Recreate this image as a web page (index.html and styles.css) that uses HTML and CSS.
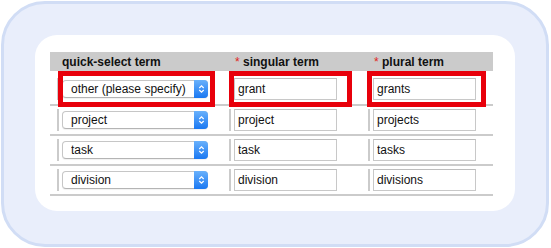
FILE: index.html
```html
<!DOCTYPE html>
<html>
<head>
	<meta charset="utf-8">
	<title>Terms</title>
	<link rel="stylesheet" href="styles.css">
</head>
<body>
	<div class="frame">
		<div class="panel">
			<div class="terms">
				<div class="row head">
					<div class="gap"></div>
					<div class="cell first">quick-select term</div>
					<div class="cell"><span class="req">*</span> singular term</div>
					<div class="cell"><span class="req">*</span> plural term</div>
				</div>

				<div class="row top">
					<div class="gap"></div>
					<div class="cell first flag">
						<div class="picker">
							<select class="pick"><option>other (please specify)</option></select>
							<span class="arrows"><svg width="7" height="10" viewBox="0 0 7 10"><path d="M1.3 4 L3.5 1.8 L5.7 4 M1.3 6 L3.5 8.2 L5.7 6" fill="none" stroke="#fff" stroke-width="1.2"/></svg></span>
						</div>
						<span class="mark m1"></span>
					</div>
					<div class="cell flag"><input class="term" type="text" value="grant"><span class="mark m2"></span></div>
					<div class="cell flag"><input class="term" type="text" value="grants"><span class="mark m3"></span></div>
				</div>

				<div class="row">
					<div class="gap"></div>
					<div class="cell first">
						<div class="picker">
							<select class="pick"><option>project</option></select>
							<span class="arrows"><svg width="7" height="10" viewBox="0 0 7 10"><path d="M1.3 4 L3.5 1.8 L5.7 4 M1.3 6 L3.5 8.2 L5.7 6" fill="none" stroke="#fff" stroke-width="1.2"/></svg></span>
						</div>
					</div>
					<div class="cell"><input class="term" type="text" value="project"></div>
					<div class="cell"><input class="term" type="text" value="projects"></div>
				</div>

				<div class="row">
					<div class="gap"></div>
					<div class="cell first">
						<div class="picker">
							<select class="pick"><option>task</option></select>
							<span class="arrows"><svg width="7" height="10" viewBox="0 0 7 10"><path d="M1.3 4 L3.5 1.8 L5.7 4 M1.3 6 L3.5 8.2 L5.7 6" fill="none" stroke="#fff" stroke-width="1.2"/></svg></span>
						</div>
					</div>
					<div class="cell"><input class="term" type="text" value="task"></div>
					<div class="cell"><input class="term" type="text" value="tasks"></div>
				</div>

				<div class="row">
					<div class="gap"></div>
					<div class="cell first">
						<div class="picker">
							<select class="pick"><option>division</option></select>
							<span class="arrows"><svg width="7" height="10" viewBox="0 0 7 10"><path d="M1.3 4 L3.5 1.8 L5.7 4 M1.3 6 L3.5 8.2 L5.7 6" fill="none" stroke="#fff" stroke-width="1.2"/></svg></span>
						</div>
					</div>
					<div class="cell"><input class="term" type="text" value="division"></div>
					<div class="cell"><input class="term" type="text" value="divisions"></div>
				</div>
			</div>
		</div>
	</div>
</body>
</html>
```

FILE: styles.css
```css
body{
  margin: 0;
  background: #fff;
  font-family: "Liberation Sans", Arial, sans-serif;
  color: #111;
}
.frame{
  box-sizing: border-box;
  width: 548px;
  height: 246px;
  margin: 1px;
  padding: 31px;
  border: 3px solid #d1ddf5;
  border-radius: 44px;
  background: #e9eefb;
}
.panel{
  height: 176px;
  box-sizing: border-box;
  padding: 17px 0 0 15px;
  border-radius: 22px;
  background: #fff;
}
.terms{
  width: 443px;
}
.row{
  display: grid;
  grid-template-columns: 7px 172px 139px 125px;
  border-bottom: 2px solid #cbcbcb;
  padding: 3px 0;
}
.row.top{
  padding: 7px 0 4px;
}
.row.head{
  background: #cbcbcb;
  border-bottom: none;
  padding: 2px 0 0;
  height: 19px;
  box-sizing: border-box;
  font-size: 12px;
  font-weight: bold;
  line-height: 17px;
}
.cell{
  border-left: 2px solid #cbcbcb;
  padding-left: 3px;
  position: relative;
}
.head .cell{
  padding-left: 4px;
}
.head .cell.first{
  padding-left: 3px;
}
.req{
  color: #e0261c;
  font-weight: normal;
}

/* mac style popup */
.picker{
  position: relative;
  width: 146px;
  margin-top: 2px;
}
.pick{
  -webkit-appearance: none;
  appearance: none;
  display: block;
  box-sizing: border-box;
  width: 146px;
  height: 18px;
  margin: 0;
  padding: 0 0 0 8px;
  border: 1px solid #c6c6c6;
  border-bottom-color: #b4b4b4;
  border-radius: 4px;
  background: #fff;
  font: 12px "Liberation Sans", Arial, sans-serif;
  color: #111;
  box-shadow: 0 1px 1px rgba(0,0,0,0.06);
}
.arrows{
  position: absolute;
  right: 0;
  top: 0;
  width: 14px;
  height: 18px;
  border-radius: 0 4px 4px 0;
  background: linear-gradient(#69b1fb, #1a78f2);
  display: flex;
  align-items: center;
  justify-content: center;
}
.term{
  display: block;
  box-sizing: border-box;
  width: 103px;
  height: 22px;
  margin: 0;
  padding: 0 0 0 3px;
  border: 1px solid #c8c8c8;
  border-top-color: #bdbdbd;
  font: 12px "Liberation Sans", Arial, sans-serif;
  color: #111;
  background: #fff;
}

/* red callout boxes */
.mark{
  position: absolute;
  top: -7px;
  height: 36px;
  box-sizing: border-box;
  border: 5px solid #e8000b;
}
.m1{
  left: -1px;
  width: 157px;
}
.m2{
  left: -2px;
  width: 123px;
}
.m3{
  left: -3px;
  width: 119px;
}
```
